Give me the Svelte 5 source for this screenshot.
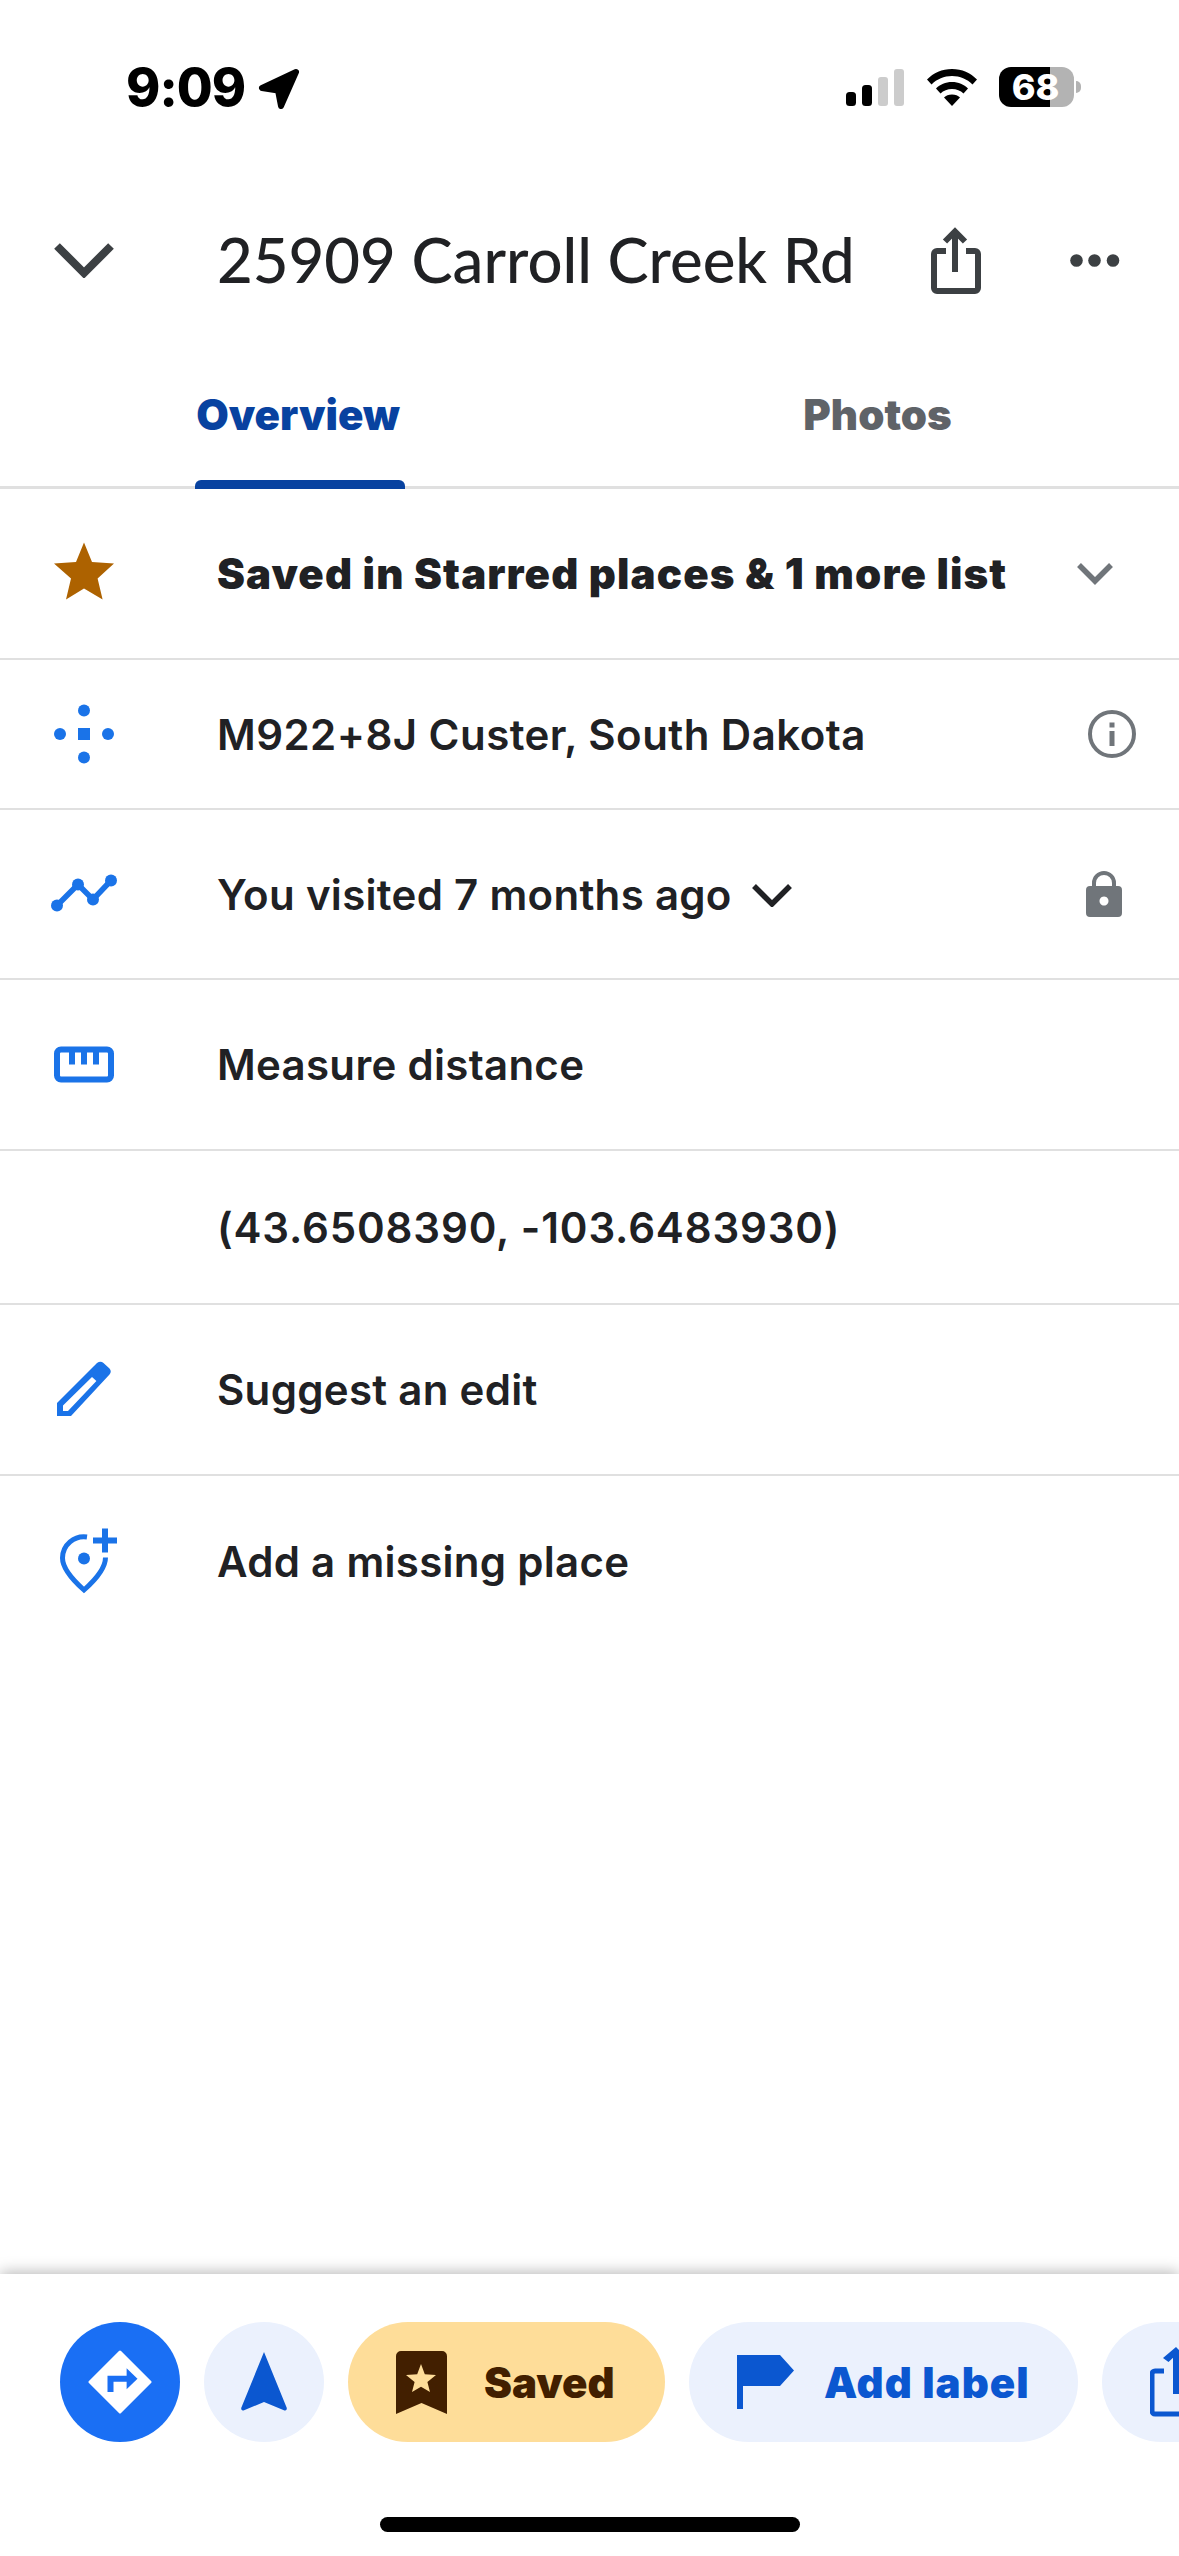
<script>
  // place detail sheet, static screenshot state
  const title = '25909 Carroll Creek Rd';
</script>

<div class="page">
  <div class="status">
    <span class="time">9:09</span>
    <svg class="loc" width="42" height="41" viewBox="0 0 42 41">
      <path d="M38 4 L4 20 L20 22.500 L23 38 Z" fill="#000" stroke="#000" stroke-width="6" stroke-linejoin="round"/>
    </svg>
    <div class="status-right">
      <svg width="58" height="37" viewBox="0 0 58 37">
        <rect x="0" y="23" width="10" height="14" rx="3.500" fill="#000"/>
        <rect x="16" y="16" width="10" height="21" rx="3.500" fill="#000"/>
        <rect x="32" y="8" width="10" height="29" rx="3" fill="#ccc"/>
        <rect x="48" y="0" width="10" height="37" rx="3" fill="#ccc"/>
      </svg>
      <svg class="wifi" width="50" height="37" viewBox="0 0 50 37">
        <path d="M25 0 C35 0 43.500 4 50 10.500 L45.500 15.500 C40 10 33 7 25 7 C17 7 10 10 4.500 15.500 L0 10.500 C6.500 4 15 0 25 0 Z" fill="#000"/>
        <path d="M25 13 C31.500 13 37 15.500 41 19.500 L36.500 24.500 C33.500 21.500 29.500 20 25 20 C20.500 20 16.500 21.500 13.500 24.500 L9 19.500 C13 15.500 18.500 13 25 13 Z" fill="#000"/>
        <path d="M25 25.500 C28.500 25.500 31 26.500 33 28.500 L25 37 L17 28.500 C19 26.500 21.500 25.500 25 25.500 Z" fill="#000"/>
      </svg>
      <div class="battery">
        <div class="cell"><span class="pct">68</span></div>
        <div class="nub"></div>
      </div>
    </div>
  </div>

  <header class="head">
    <svg class="back" width="62" height="36" viewBox="0 0 62 36">
      <path d="M4 4 L31 31 L58 4" fill="none" stroke="#3c4043" stroke-width="8"/>
    </svg>
    <h1>{title}</h1>
    <svg class="share" width="50" height="70" viewBox="0 0 50 70">
      <path d="M15 25 H6 a3 3 0 0 0 -3 3 V62 a3 3 0 0 0 3 3 H44 a3 3 0 0 0 3 -3 V28 a3 3 0 0 0 -3 -3 H35" fill="none" stroke="#3c4043" stroke-width="6"/>
      <path d="M24 46 V5" fill="none" stroke="#3c4043" stroke-width="6"/>
      <path d="M14 15.500 L24 5.500 L34 15.500" fill="none" stroke="#3c4043" stroke-width="6"/>
    </svg>
    <svg class="dots" width="50" height="13" viewBox="0 0 50 13">
      <circle cx="6.500" cy="6.500" r="6.300" fill="#3c4043"/>
      <circle cx="24.500" cy="6.500" r="6.300" fill="#3c4043"/>
      <circle cx="43" cy="6.500" r="6.300" fill="#3c4043"/>
    </svg>
  </header>

  <nav class="tabs">
    <div class="tab active">Overview</div>
    <div class="tab photos">Photos</div>
  </nav>

  <section class="rows">
    <div class="row">
      <svg class="ico" width="72" height="72" viewBox="0 0 72 72">
        <path d="M36 4.500 L44 24 L66 25.500 L49.600 40.500 L54.600 61.500 L36 50.500 L18 61.500 L23 40.500 L6 25.500 L28 24 Z" fill="#ad6200"/>
      </svg>
      <span class="label strong">Saved in Starred places &amp; 1 more list</span>
      <svg class="end chev" width="36" height="22" viewBox="0 0 36 22">
        <path d="M2 2 L18 18 L34 2" fill="none" stroke="#70757a" stroke-width="5.500"/>
      </svg>
    </div>

    <div class="row short">
      <svg class="ico" width="72" height="72" viewBox="0 0 72 72">
        <circle cx="36" cy="12.500" r="6" fill="#1a73e8"/>
        <circle cx="36" cy="59.500" r="6" fill="#1a73e8"/>
        <circle cx="12" cy="36" r="6" fill="#1a73e8"/>
        <circle cx="60" cy="36" r="6" fill="#1a73e8"/>
        <rect x="30" y="30" width="12" height="12" fill="#1a73e8"/>
      </svg>
      <span class="label wide">M922+8J Custer, South Dakota</span>
      <svg class="end info" width="48" height="48" viewBox="0 0 48 48">
        <circle cx="24" cy="24" r="22" fill="none" stroke="#70757a" stroke-width="4"/>
        <rect x="21.500" y="12.500" width="5" height="5" fill="#70757a"/>
        <rect x="21.500" y="21" width="5" height="15" fill="#70757a"/>
      </svg>
    </div>

    <div class="row visited">
      <svg class="ico" width="72" height="72" viewBox="0 0 72 72">
        <path d="M9 47.500 L30 26.500 L45 41.500 L63 22.500" fill="none" stroke="#1a73e8" stroke-width="5.500"/>
        <circle cx="9" cy="47.500" r="6" fill="#1a73e8"/>
        <circle cx="30" cy="26.500" r="6" fill="#1a73e8"/>
        <circle cx="45" cy="41.500" r="6" fill="#1a73e8"/>
        <circle cx="63" cy="22.500" r="6" fill="#1a73e8"/>
      </svg>
      <span class="label">You visited 7 months ago</span>
      <svg class="inline-chev" width="40" height="23" viewBox="0 0 40 23">
        <path d="M2 2 L20 20 L38 2" fill="none" stroke="#202124" stroke-width="5.500"/>
      </svg>
      <svg class="end lock" width="36" height="48" viewBox="0 0 36 48">
        <path d="M8 17 V13 a10 10 0 0 1 20 0 V17" fill="none" stroke="#70757a" stroke-width="4"/>
        <path fill-rule="evenodd" d="M4 16 H32 a4 4 0 0 1 4 4 V43 a4 4 0 0 1 -4 4 H4 a4 4 0 0 1 -4 -4 V20 a4 4 0 0 1 4 -4 Z M18 26.500 a4.500 4.500 0 1 0 0.010 0 Z" fill="#70757a"/>
      </svg>
    </div>

    <div class="row">
      <svg class="ico" width="72" height="72" viewBox="0 0 72 72">
        <rect x="9" y="20.500" width="54" height="30" rx="4" fill="none" stroke="#1a73e8" stroke-width="6"/>
        <path d="M24 20 V35.500 M36 20 V35.500 M48 20 V35.500" fill="none" stroke="#1a73e8" stroke-width="6"/>
      </svg>
      <span class="label">Measure distance</span>
    </div>

    <div class="row coords">
      <span class="ico blank"></span>
      <span class="label">(43.6508390, -103.6483930)</span>
    </div>

    <div class="row">
      <svg class="ico" width="72" height="72" viewBox="0 0 72 72">
        <path fill-rule="evenodd" d="M9 62 V49 L46 12 L49 9 Q52.500 6.500 55.500 9 L61.500 14.500 Q64 17.500 61.500 20.500 L23 62 Z M15 51.600 V57 H20 L48.400 27 L44 23 Z" fill="#1a73e8"/>
      </svg>
      <span class="label">Suggest an edit</span>
    </div>

    <div class="row last">
      <svg class="ico" width="72" height="72" viewBox="0 0 72 72">
        <path d="M39 11 A21.500 21.500 0 0 0 14.500 32 C14.500 44 27 56 36 64 C45 56 57.500 44 57.500 31.500" fill="none" stroke="#1a73e8" stroke-width="5"/>
        <circle cx="36" cy="32.500" r="6" fill="#1a73e8"/>
        <path d="M45 14.500 H69 M57 2.500 V26.500" fill="none" stroke="#1a73e8" stroke-width="6"/>
      </svg>
      <span class="label">Add a missing place</span>
    </div>
  </section>

  <div class="spacer"></div>

  <footer class="bar">
    <div class="actions">
      <div class="round primary">
        <svg width="64" height="64" viewBox="0 0 64 64">
          <path d="M32 2 L62 32 L32 62 L2 32 Z" fill="#fff" stroke="#fff" stroke-width="3" stroke-linejoin="round"/>
          <path d="M22.500 42 V28.800 H40" fill="none" stroke="#1a6ff4" stroke-width="6"/>
          <path d="M38.600 18.300 L49.500 28.800 L38.600 39.300 Z" fill="#1a6ff4"/>
        </svg>
      </div>
      <div class="round">
        <svg width="46" height="60" viewBox="0 0 46 60">
          <path d="M23 0 L45.800 56 Q46 59 43.500 58.500 L23 50 L2.500 58.500 Q0 59 0.200 56 Z" fill="#0b57d0"/>
        </svg>
      </div>
      <div class="pill saved">
        <svg width="51" height="63" viewBox="0 0 51 63">
          <path fill-rule="evenodd" d="M5 0 H46 a5 5 0 0 1 5 5 V63 L25.500 52 L0 63 V5 a5 5 0 0 1 5 -5 Z M25 13 L21.200 23.200 L10 24 L18.600 31 L16 41 L25 35.700 L34 41 L31.400 31 L40 24 L28.800 23.200 Z" fill="#421f00"/>
        </svg>
        <span>Saved</span>
      </div>
      <div class="pill label-btn">
        <svg width="57" height="54" viewBox="0 0 57 54">
          <path d="M0 0 H43 L57 15.500 L43 31 H6 V54 H0 Z" fill="#0b57d0"/>
        </svg>
        <span>Add label</span>
      </div>
      <div class="pill share-btn">
        <svg width="50" height="70" viewBox="0 0 50 70">
          <path d="M14 24 H5 a3 3 0 0 0 -3 3 V64 a3 3 0 0 0 3 3 H45" fill="none" stroke="#0b57d0" stroke-width="5"/>
          <path d="M26 47 V4" fill="none" stroke="#0b57d0" stroke-width="6"/>
          <path d="M26 0 L37 11 L33.500 15 L26 8 L18.500 15 L13 11 Z" fill="#0b57d0"/>
        </svg>
      </div>
    </div>
    <div class="home"></div>
  </footer>
</div>

<style>
  :global(body) {
    margin: 0;
    background: #fff;
  }

  .page {
    width: 1179px;
    height: 2556px;
    display: flex;
    flex-direction: column;
    overflow: hidden;
    font-family: Inter, "Liberation Sans", sans-serif;
    color: #202124;
  }

  .status {
    height: 190px;
    box-sizing: border-box;
    padding: 68px 98px 0 126px;
    display: flex;
    align-items: flex-start;
  }

  .time {
    font-size: 52px;
    line-height: 40px;
    font-weight: 800;
    color: #000;
    letter-spacing: -1px;
  }

  .loc {
    margin-left: 13px;
  }

  .status-right {
    margin-left: auto;
    display: flex;
    align-items: flex-start;
  }

  .wifi {
    margin-left: 23px;
    margin-top: 0;
  }

  .status-right > svg {
    margin-top: 1px;
  }

  .battery {
    margin-left: 22px;
    margin-top: -1px;
    display: flex;
    align-items: center;
  }

  .cell {
    width: 75px;
    height: 40px;
    border-radius: 12px;
    background: linear-gradient(90deg, #000 0 51px, #b3b3b3 51px);
    display: flex;
    align-items: center;
    justify-content: center;
  }

  .pct {
    font-size: 36px;
    font-weight: 800;
    color: #fff;
    line-height: 40px;
    margin-right: 2px;
  }

  .nub {
    width: 5px;
    height: 12px;
    margin-left: 2px;
    background: #b3b3b3;
    border-radius: 0 6px 6px 0;
  }

  .head {
    height: 140px;
    box-sizing: border-box;
    padding-left: 53px;
    display: flex;
    align-items: center;
  }

  .back {
    margin-right: 102px;
  }

  h1 {
    margin: 0;
    width: 714px;
    font-family: Lato, sans-serif;
    font-weight: 500;
    font-size: 61.7px;
    line-height: 70px;
    margin-top: -3px;
    color: #202124;
    white-space: nowrap;
  }

  .share {
    margin-top: 1px;
  }

  .dots {
    margin-left: 89px;
  }

  .tabs {
    height: 159px;
    box-sizing: border-box;
    border-bottom: 3px solid #e0e0e0;
    padding-left: 195px;
    display: flex;
  }

  .tab {
    position: relative;
    width: 210px;
    height: 159px;
    box-sizing: border-box;
    padding-top: 60px;
    text-align: center;
    font-size: 42px;
    line-height: 50px;
    font-weight: 900;
    color: #5f6368;
  }

  .tab.active {
    color: #0842a0;
    padding-right: 4px;
  }

  .tab.active::after {
    content: '';
    position: absolute;
    left: 0;
    right: 0;
    bottom: 0;
    height: 9px;
    border-radius: 6px 6px 0 0;
    background: #0842a0;
  }

  .tab.photos {
    width: 171px;
    margin-left: 387px;
  }

  .row {
    height: 171px;
    box-sizing: border-box;
    border-bottom: 2px solid #e0e0e0;
    padding-left: 48px;
    display: flex;
    align-items: center;
  }

  .row.short {
    height: 150px;
  }

  .row.visited {
    height: 170px;
  }

  .row.coords {
    height: 154px;
  }

  .row.coords .label {
    letter-spacing: 0.85px;
  }

  .row.last {
    border-bottom: none;
  }

  .ico {
    width: 72px;
    height: 72px;
    margin-right: 97px;
    flex-shrink: 0;
  }

  .blank {
    display: block;
  }

  .label {
    font-size: 42px;
    font-weight: 600;
    letter-spacing: 0.3px;
    white-space: nowrap;
  }

  .label.wide {
    letter-spacing: 0.45px;
  }

  .label.strong {
    font-weight: 900;
    letter-spacing: 1.1px;
  }

  .end {
    margin-left: auto;
    flex-shrink: 0;
  }

  .chev {
    margin-right: 66px;
  }

  .info {
    margin-right: 43px;
  }

  .lock {
    margin-right: 57px;
  }

  .inline-chev {
    margin-left: 20px;
    margin-top: 2px;
  }

  .spacer {
    flex: 1;
  }

  .bar {
    height: 282px;
    box-sizing: border-box;
    padding-top: 48px;
    background: #fff;
    box-shadow: 0 -2px 14px rgba(0, 0, 0, 0.28);
  }

  .actions {
    display: flex;
    gap: 24px;
    padding-left: 60px;
  }

  .round {
    width: 120px;
    height: 120px;
    border-radius: 50%;
    background: #ebf1fd;
    display: flex;
    align-items: center;
    justify-content: center;
    flex-shrink: 0;
  }

  .round.primary {
    background: #1a6ff4;
  }

  .pill {
    height: 120px;
    border-radius: 60px;
    box-sizing: border-box;
    background: #ebf1fd;
    display: flex;
    align-items: center;
    flex-shrink: 0;
    font-size: 42px;
    font-weight: 900;
    color: #0b57d0;
    padding-left: 48px;
  }

  .pill.saved {
    width: 317px;
    background: #fedd99;
    color: #421f00;
    gap: 37px;
  }

  .pill.label-btn {
    width: 389px;
    gap: 30px;
    letter-spacing: 1px;
  }

  .pill.share-btn {
    width: 200px;
  }

  .home {
    width: 420px;
    height: 15px;
    margin: 75px auto 0;
    border-radius: 8px;
    background: #000;
  }
</style>
